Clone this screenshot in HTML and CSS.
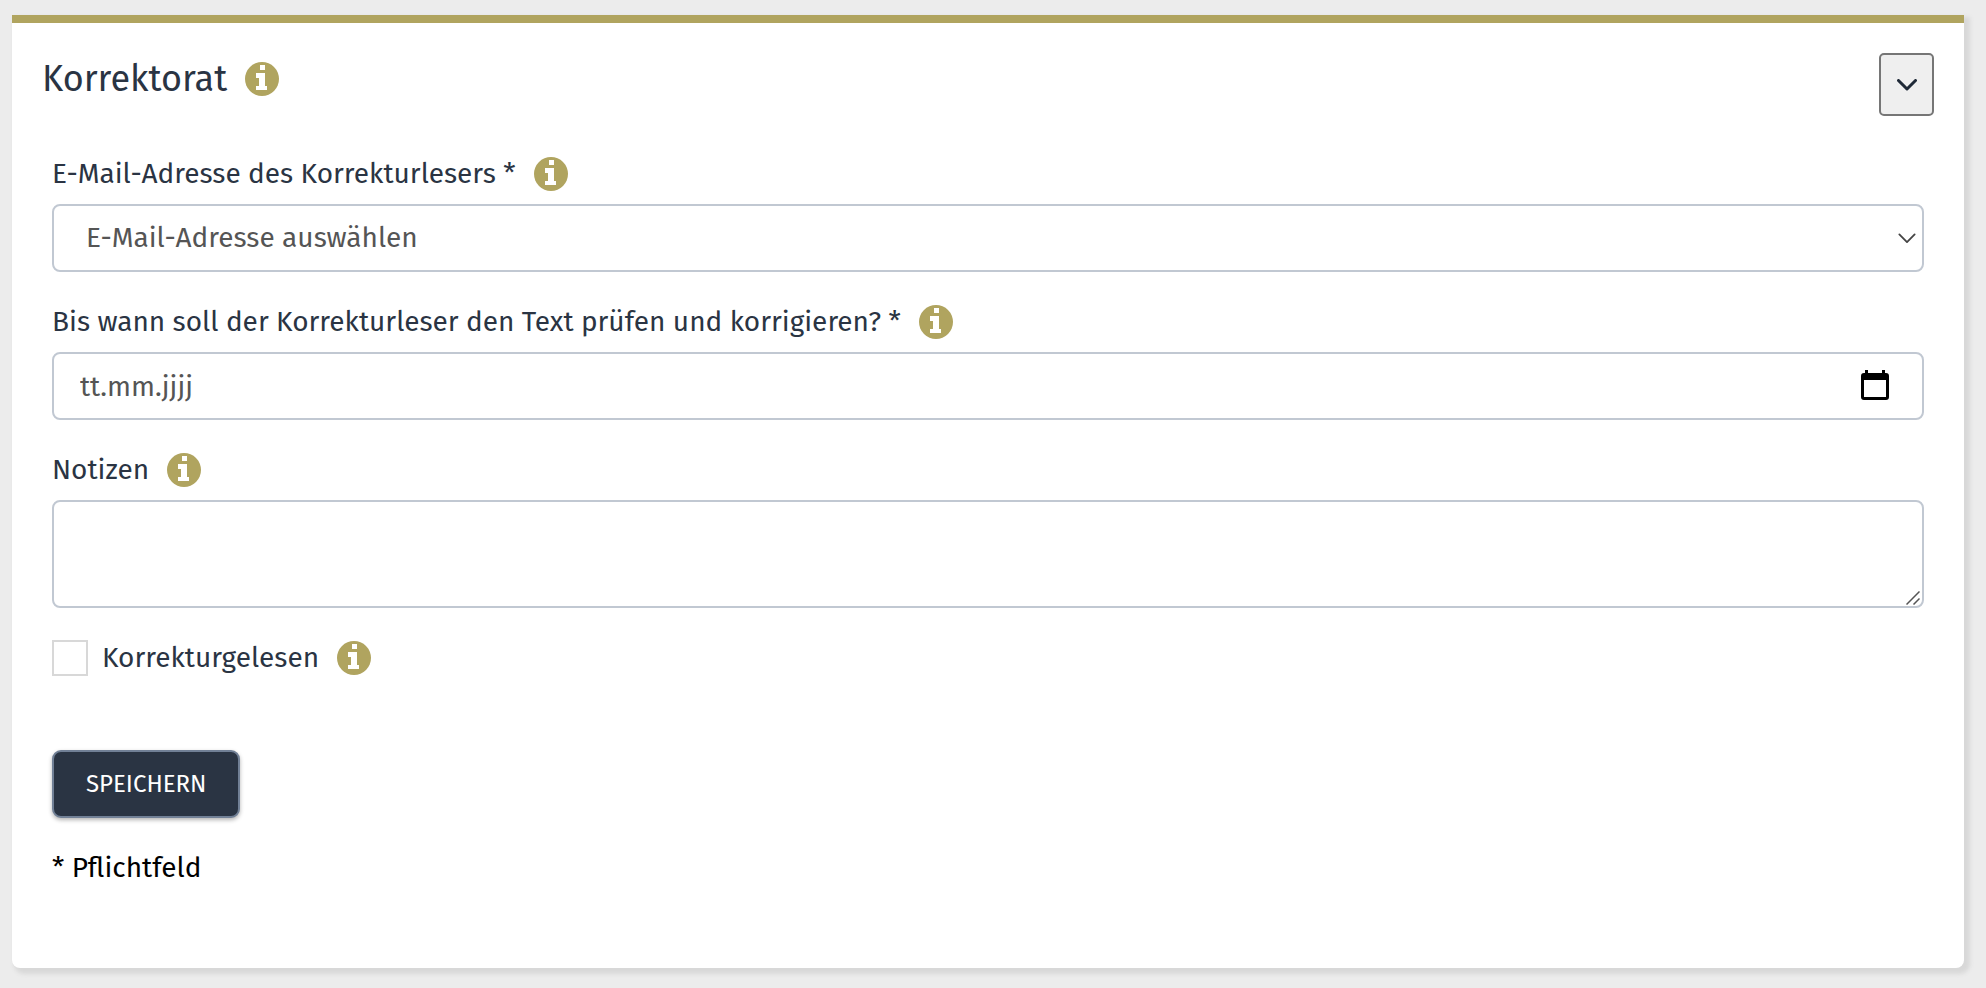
FILE: index.html
```html
<!DOCTYPE html>
<html lang="de">
<head>
  <meta charset="UTF-8">
  <meta name="viewport" content="width=device-width, initial-scale=1">
  <title>Korrektorat</title>
  <link rel="stylesheet" href="styles.css">
</head>
<body>

  <!-- Shared icons -->
  <svg class="sprite" aria-hidden="true">
    <symbol id="icon-info" viewBox="0 0 34 34">
      <circle cx="17" cy="17" r="17" fill="#b0a45f"/>
      <path fill="#fff" d="M15 3h5v5h-5zM11 11h9v13h2v4H11v-4h3v-8h-3z"/>
    </symbol>
    <symbol id="icon-chevron" viewBox="0 0 20 12">
      <path fill="none" stroke="currentColor" stroke-linecap="round" stroke-linejoin="round" d="M1.500 1.500 10 10l8.500-8.500"/>
    </symbol>
  </svg>

  <section class="card">
    <header class="card-header">
      <h2>Korrektorat <svg class="info"><use href="#icon-info"/></svg></h2>
      <button type="button" class="toggle" aria-label="Bereich einklappen">
        <svg class="toggle-icon"><use href="#icon-chevron"/></svg>
      </button>
    </header>

    <form>
      <!-- E-Mail -->
      <div class="field">
        <div class="label-row">
          <label for="email">E-Mail-Adresse des Korrekturlesers *</label>
          <svg class="info"><use href="#icon-info"/></svg>
        </div>
        <div class="control">
          <select id="email">
            <option>E-Mail-Adresse auswählen</option>
          </select>
          <svg class="select-icon"><use href="#icon-chevron"/></svg>
        </div>
      </div>

      <!-- Datum -->
      <div class="field">
        <div class="label-row">
          <label for="deadline">Bis wann soll der Korrekturleser den Text prüfen und korrigieren? *</label>
          <svg class="info"><use href="#icon-info"/></svg>
        </div>
        <div class="control">
          <input type="text" id="deadline" placeholder="tt.mm.jjjj">
          <svg class="date-icon" viewBox="0 0 28 30">
            <path fill-rule="evenodd" d="M4 0h3v3h14V0h3v3h1a3 3 0 0 1 3 3v21a3 3 0 0 1-3 3H3a3 3 0 0 1-3-3V6a3 3 0 0 1 3-3h1zM3 10v17h22V10z"/>
          </svg>
        </div>
      </div>

      <!-- Notizen -->
      <div class="field">
        <div class="label-row">
          <label for="notes">Notizen</label>
          <svg class="info"><use href="#icon-info"/></svg>
        </div>
        <div class="control">
          <textarea id="notes"></textarea>
          <svg class="grip" viewBox="0 0 14 14">
            <path fill="none" stroke="#555" stroke-width="1.500" d="M.5 13.500l13-13M7.500 13.500l6-6"/>
          </svg>
        </div>
      </div>

      <div class="check-row">
        <input type="checkbox" id="done">
        <label for="done">Korrekturgelesen</label>
        <svg class="info"><use href="#icon-info"/></svg>
      </div>

      <button type="submit" class="save">Speichern</button>
      <p class="required">* Pflichtfeld</p>
    </form>
  </section>

</body>
</html>
```
FILE: styles.css
```css
* {
  box-sizing: border-box;
}

body {
  margin: 0;
  padding: 15px 22px 20px 12px;
  background: #ececec;
  color: #2a3443;
  font-family: "Fira Sans", "Open Sans", sans-serif;
  font-size: 28px;
  line-height: 36px;
}

.sprite {
  display: none;
}

.card {
  padding: 30px 30px 82px;
  background: #fff;
  border-top: 8px solid #b0a45f;
  border-radius: 0 0 8px 8px;
  box-shadow: 4px 4px 4px 2px #d8d8d8;
}

.card-header {
  display: flex;
  justify-content: space-between;
  align-items: center;
  margin-bottom: 40px;
}

h2 {
  display: flex;
  align-items: center;
  gap: 18px;
  margin: 0;
  padding-bottom: 12px;
  font-size: 36px;
  font-weight: 400;
}

.info {
  flex: none;
  width: 34px;
  height: 34px;
}

.toggle {
  display: flex;
  align-items: center;
  justify-content: center;
  width: 55px;
  height: 63px;
  padding: 0;
  background: #efefef;
  border: 2px solid #767676;
  border-radius: 5px;
  color: #1f2937;
}

.toggle-icon {
  width: 20px;
  height: 12px;
  stroke-width: 3;
}

form {
  padding: 0 10px;
}

.field {
  margin-bottom: 32px;
}

.label-row {
  display: flex;
  align-items: center;
  gap: 18px;
  margin-bottom: 12px;
}

.control {
  position: relative;
}

select,
textarea,
input[type="text"] {
  display: block;
  width: 100%;
  height: 68px;
  padding: 0 26px;
  background: #fff;
  border: 2px solid #c1c8d2;
  border-radius: 8px;
  color: #555;
  font: inherit;
}

select {
  padding: 0 32px;
  appearance: none;
}

textarea {
  height: 108px;
  resize: none;
}

::placeholder {
  color: #555;
  opacity: 1;
}

.select-icon,
.date-icon,
.grip {
  position: absolute;
  pointer-events: none;
}

.select-icon {
  top: 29px;
  right: 8px;
  width: 18px;
  height: 11px;
  color: #444;
  stroke-width: 2;
}

.date-icon {
  top: 18px;
  right: 35px;
  width: 28px;
  height: 30px;
}

.grip {
  right: 4px;
  bottom: 3px;
  width: 14px;
  height: 14px;
}

.check-row {
  display: flex;
  align-items: center;
  margin-bottom: 74px;
}

.check-row label {
  margin: 0 18px 0 14px;
}

.check-row input {
  width: 36px;
  height: 36px;
  margin: 0;
  background: #fff;
  border: 2px solid #d8d8d8;
  appearance: none;
}

.save {
  display: block;
  height: 68px;
  padding: 0 32px;
  background: #2a3443;
  border: 2px solid #718096;
  border-radius: 9px;
  box-shadow: 0 2px 4px rgba(0, 0, 0, 0.3);
  color: #fff;
  font: inherit;
  font-size: 24px;
  text-transform: uppercase;
}

.required {
  margin: 32px 0 0;
  color: #000;
}
```
